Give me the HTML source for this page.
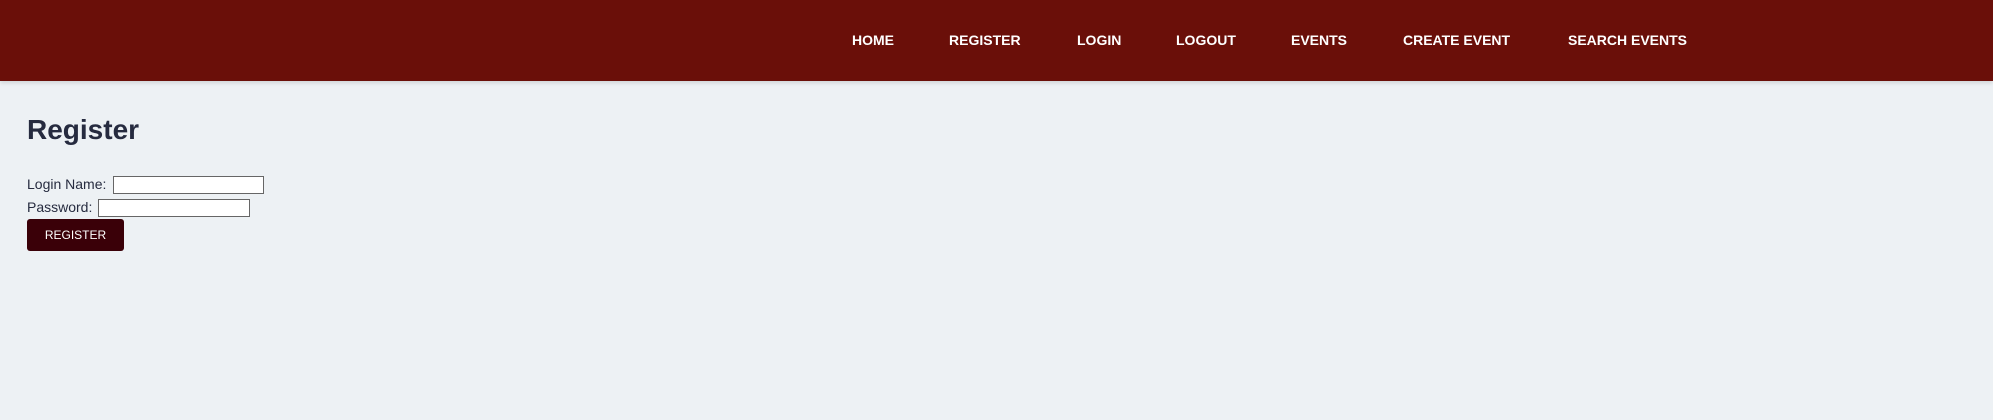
<!DOCTYPE html>
<html><head><style>
body{margin:0;background:#edf1f4;font-family:"Liberation Sans",Arial,sans-serif;width:1993px;height:420px;overflow:hidden;}
.hdr{height:81px;background:#6a0f09;position:relative;box-shadow:0 2px 4px rgba(0,0,0,.12);}
.hdr a{position:absolute;top:32px;color:#fff;font-weight:bold;font-size:14px;text-decoration:none;line-height:17px;}
h1{position:absolute;left:27px;top:114px;margin:0;font-size:28px;color:#262b3f;}
.f{position:absolute;left:27px;font-size:14px;color:#262b3f;}
input{position:absolute;height:15px;border:1px solid #666;background:#fff;margin:0;padding:0;box-sizing:border-box;}
.btn{position:absolute;left:27px;top:219px;width:97px;height:32px;background:#3a0008;color:#fff;font-size:12px;border-radius:3px;text-align:center;line-height:32px;}
</style></head><body>
<div class="hdr">
<a style="left:852px">HOME</a>
<a style="left:949px">REGISTER</a>
<a style="left:1077px">LOGIN</a>
<a style="left:1176px">LOGOUT</a>
<a style="left:1291px">EVENTS</a>
<a style="left:1403px">CREATE EVENT</a>
<a style="left:1568px">SEARCH EVENTS</a>
</div>
<h1>Register</h1>
<div class="f" style="top:176px">Login Name:</div>
<input style="left:113px;top:176px;width:151px;height:18px">
<div class="f" style="top:199px">Password:</div>
<input style="left:98px;top:199px;width:152px;height:18px">
<div class="btn">REGISTER</div>
</body></html>
